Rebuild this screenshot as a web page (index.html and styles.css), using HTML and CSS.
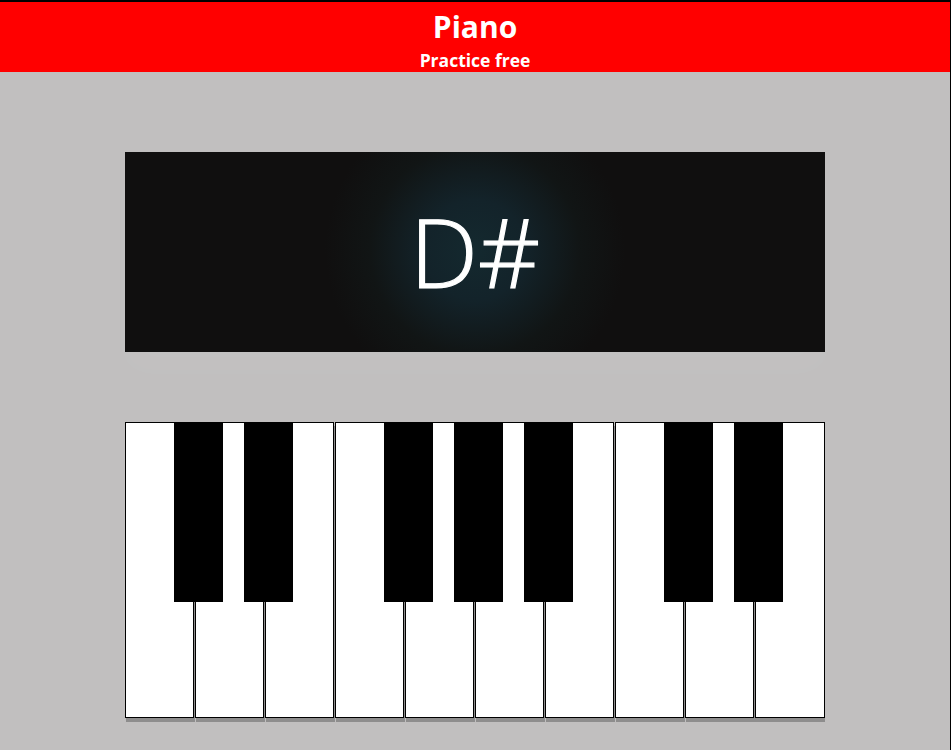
FILE: index.html
```html
<!DOCTYPE html>
<html lang="en">
<head>
<meta charset="utf-8">
<title>Piano</title>
<link rel="stylesheet" href="styles.css">
</head>
<body>
<div class="page">
  <header class="header">
    <h1 class="title">Piano</h1>
    <p class="subtitle">Practice free</p>
  </header>
  <main class="main">
    <section class="display">
      <span class="note">D#</span>
    </section>
    <section class="keyboard">
      <div class="white-key"></div>
      <div class="white-key"></div>
      <div class="white-key"></div>
      <div class="white-key"></div>
      <div class="white-key"></div>
      <div class="white-key"></div>
      <div class="white-key"></div>
      <div class="white-key"></div>
      <div class="white-key"></div>
      <div class="white-key last"></div>
      <div class="black-key k1"></div>
      <div class="black-key k2"></div>
      <div class="black-key k3"></div>
      <div class="black-key k4"></div>
      <div class="black-key k5"></div>
      <div class="black-key k6"></div>
      <div class="black-key k7"></div>
    </section>
  </main>
</div>
</body>
</html>
```
FILE: styles.css
```css
html, body {
  margin: 0;
  padding: 0;
}
body {
  background: #c1bfbf;
  font-family: "Open Sans", "Noto Sans", sans-serif;
}
.page {
  box-sizing: border-box;
  width: 951px;
  height: 750px;
  border-top: 2px solid #000;
  border-right: 1px solid #000;
  background: #c1bfbf;
  overflow: hidden;
}
.header {
  height: 70px;
  background: #ff0000;
  color: #fff;
  text-align: center;
  display: flex;
  flex-direction: column;
  align-items: center;
}
.title {
  margin: 0;
  padding-top: 5px;
  font-size: 30px;
  line-height: 40px;
  font-weight: 700;
}
.subtitle {
  margin: 0;
  padding-top: 2px;
  font-size: 17.5px;
  line-height: 22px;
  font-weight: 700;
}
.main {
  display: flex;
  flex-direction: column;
  align-items: center;
  padding-top: 80px;
}
.display {
  width: 700px;
  height: 200px;
  background: radial-gradient(circle at 50% 49%, #14292f 0, #13232a 50px, #111515 105px, #100f0f 150px);
  display: flex;
  align-items: center;
  justify-content: center;
  box-shadow: 0 18px 30px rgba(255, 255, 255, 0.04);
}
.note {
  color: #fff;
  font-size: 96px;
  font-weight: 300;
  line-height: 1;
  margin-top: -2px;
  -webkit-text-stroke: 1.2px #fff;
}
.keyboard {
  position: relative;
  margin-top: 70px;
  width: 700px;
  height: 296px;
  display: flex;
}
.white-key {
  box-sizing: border-box;
  width: 69px;
  height: 296px;
  margin-right: 1px;
  background: #fff;
  border: 1px solid #000;
  box-shadow: 1px 4px 0 #8e8d8d;
}
.white-key.last {
  width: 70px;
  margin-right: 0;
  box-shadow: 0 4px 0 #8e8d8d;
}
.black-key {
  position: absolute;
  top: 0;
  width: 49px;
  height: 180px;
  background: #000;
}
.k1 { left: 49px; }
.k2 { left: 119px; }
.k3 { left: 259px; }
.k4 { left: 329px; }
.k5 { left: 399px; }
.k6 { left: 539px; }
.k7 { left: 609px; }
```
